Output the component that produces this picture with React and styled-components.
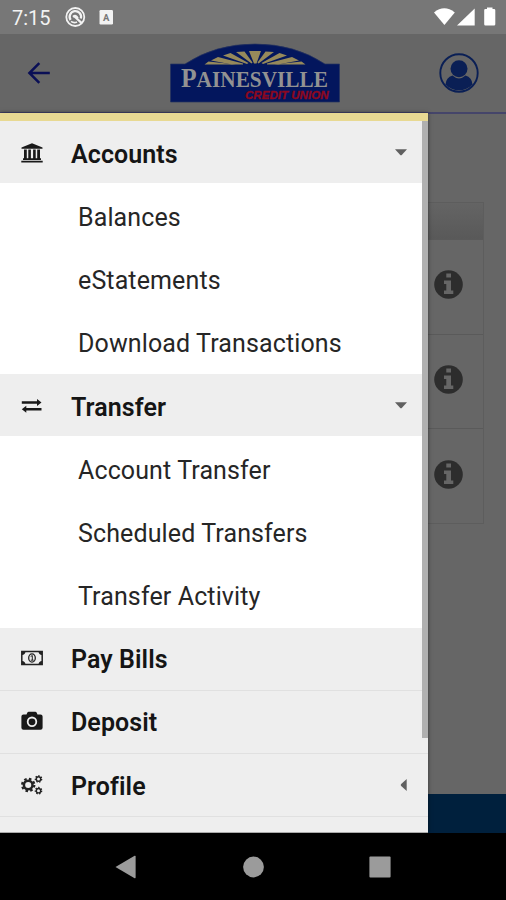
import React from 'react'
import styled, { createGlobalStyle } from 'styled-components'

const menu = [
  {
    title: 'Accounts',
    icon: 'bank',
    open: true,
    items: ['Balances', 'eStatements', 'Download Transactions'],
  },
  {
    title: 'Transfer',
    icon: 'exchange',
    open: true,
    items: ['Account Transfer', 'Scheduled Transfers', 'Transfer Activity'],
  },
  { title: 'Pay Bills', icon: 'money' },
  { title: 'Deposit', icon: 'camera' },
  { title: 'Profile', icon: 'cogs', closed: true },
]

function App() {
  return (
    <Screen>
      <GlobalStyle />
      <StatusBar>
        <Clock>7:15</Clock>
        <StatusIcons />
        <Spacer />
        <SignalIcons />
      </StatusBar>
      <Header>
        <BackArrow />
        <LogoBox><Logo /></LogoBox>
        <UserIcon />
      </Header>
      <Page>
        <Card>
          <CardHead />
          <CardRow><InfoIcon /></CardRow>
          <CardRow><InfoIcon /></CardRow>
          <CardRow><InfoIcon /></CardRow>
        </Card>
      </Page>
      <Footer />
      <NavBar>
        <svg width="22" height="24" viewBox="0 0 22 24">
          <path d="M0.5 12 L19.6 0.8 Q20.6 .4 20.6 1.4 V22.6 Q20.6 23.6 19.6 23.2 Z" fill="#9b9b9b" />
        </svg>
        <svg width="22" height="22" viewBox="0 0 22 22">
          <circle cx="11.5" cy="11" r="10.4" fill="#9b9b9b" />
        </svg>
        <svg width="22" height="22" viewBox="0 0 22 22">
          <rect x=".4" y=".4" width="21.2" height="21.2" rx="1" fill="#9b9b9b" />
        </svg>
      </NavBar>
      <Drawer>
        {menu.map(group => (
          <React.Fragment key={group.title}>
            <GroupTitle $plain={!group.items}>
              <IconBox><MenuIcon name={group.icon} /></IconBox>
              <Label>{group.title}</Label>
              {group.open && (
                <Caret width="12" height="7" viewBox="0 0 12 7">
                  <path d="M0 .3H12L7 5.8Q6 6.8 5 5.8Z" fill="#606060" />
                </Caret>
              )}
              {group.closed && (
                <Caret width="7" height="12" viewBox="0 0 7 12">
                  <path d="M6.7 0V12L1.2 7Q.2 6 1.2 5Z" fill="#606060" />
                </Caret>
              )}
            </GroupTitle>
            {group.items && (
              <SubList>
                {group.items.map(item => <SubItem key={item}>{item}</SubItem>)}
              </SubList>
            )}
          </React.Fragment>
        ))}
        <NextGroup />
        <ScrollThumb />
      </Drawer>
    </Screen>
  )
}

export default App

function StatusIcons() {
  return (
    <svg width="50" height="22" viewBox="0 0 50 22" fill="none">
      <circle cx="10.3" cy="11" r="9" stroke="#f2f2f2" strokeWidth="1.8" />
      <path d="M5.6 14A5.7 5.7 0 1 1 15.8 12.5" stroke="#f2f2f2" strokeWidth="2.3" />
      <path d="M9.5 10.5L17 17.4M8 10.8Q11 8.5 12.7 12.5" stroke="#f2f2f2" strokeWidth="2.2" />
      <path d="M6 15.4Q9 17.6 12 16" stroke="#f2f2f2" strokeWidth="1.7" />
      <rect x="34.5" y="4" width="13.5" height="14.5" rx="1.2" fill="#f2f2f2" />
      <text x="41.3" y="14.6" textAnchor="middle" fontFamily="Roboto, sans-serif" fontWeight="700" fontSize="9.5" fill="#777">A</text>
    </svg>
  )
}

function SignalIcons() {
  return (
    <svg width="64" height="20" viewBox="0 0 64 20" fill="#fff">
      <path d="M0 5.5Q10.2 -2.8 20.8 5.5L10.4 18Z" />
      <path d="M23 18.5H40.7V1.5Z" />
      <path d="M50.2 3.2Q50.2 2 51.4 2H53V.4H58.5V2H60Q61.3 2 61.3 3.2V17.3Q61.3 18.5 60 18.5H51.4Q50.2 18.5 50.2 17.3Z" />
    </svg>
  )
}

function BackArrow() {
  return (
    <svg width="24" height="24" viewBox="0 0 24 24" fill="none" stroke="#0a0f56" strokeWidth="2.5">
      <path d="M22.8 12H2.5M12.3 2.2L2.4 12L12.3 21.8" />
    </svg>
  )
}

function Logo() {
  return (
    <svg width="170" height="60" viewBox="0 0 170 60">
      <path d="M.5 21H15Q45 1 85 1T155 21H169.5V59H.5Z" fill="#03165d" stroke="#26345f" strokeWidth=".7" />
      <g fill="#96895b">
        <path d="M79 8H91L86.5 20.5H84Z" />
        <path d="M66 9L74.500 8.500L82.500 19.500L81.500 20.500Z" />
        <path d="M104 9L95.500 8.500L87.500 19.500L88.500 20.500Z" />
        <path d="M53 12.5L60.5 10L78.5 20L77 21Z" />
        <path d="M117 12.5L109.5 10L91.5 20L93 21Z" />
        <path d="M41 17.5L48 14L73 20.5V21.5H62Z" />
        <path d="M129 17.5L122 14L97 20.5V21.5H108Z" />
        <path d="M34.5 21.5L38.5 18.5L66 21.5ZM135.500 21.5L131.5 18.5L104 21.5Z" />
      </g>
      <text y="44.4" x="11" textLength="147" lengthAdjust="spacingAndGlyphs" fontFamily="'Liberation Serif', serif" fontWeight="700" fill="#929292">
        <tspan fontSize="27">P</tspan><tspan fontSize="22.5">AINESVILLE</tspan>
      </text>
      <text y="55.6" x="75" textLength="83.5" lengthAdjust="spacingAndGlyphs" fontFamily="'Liberation Sans', sans-serif" fontWeight="700" fontStyle="italic" fontSize="11" fill="#8c0820" stroke="#8c0820" strokeWidth=".4">CREDIT UNION</text>
    </svg>
  )
}

function UserIcon() {
  return (
    <svg width="40" height="40" viewBox="0 0 40 40">
      <circle cx="20" cy="20" r="18.7" fill="none" stroke="#0a1f55" strokeWidth="1.9" />
      <circle cx="20" cy="15.8" r="8.5" fill="#0a1f55" />
      <path d="M6.5 31.5Q7 24.5 13.5 22.5Q20 28.5 26.5 22.5Q33 24.5 33.5 31.5A18.5 18.5 0 0 1 6.5 31.5Z" fill="#0a1f55" />
    </svg>
  )
}

function InfoIcon() {
  return (
    <svg width="29" height="29" viewBox="0 0 29 29">
      <circle cx="14.5" cy="14.5" r="14.3" fill="#2d2d2d" />
      <path d="M12.3 3.5H17V7.6H12.3ZM10 10.500H17V20.5H19.3V24H10V20.5H12.3V14H10Z" fill="#666" />
    </svg>
  )
}

function MenuIcon({ name }) {
  if (name === 'bank') {
    return (
      <svg width="22" height="20" viewBox="0 0 22 20" fill="#191919">
        <path d="M.5 4.4L11 .2L21.5 4.4V5.8H.5Z" />
        <path d="M3 6.4H5.8V16H3ZM7.3 6.4H9.9V16H7.3ZM12.1 6.4H14.7V16H12.1ZM16.2 6.4H19V16H16.2Z" />
        <path d="M2 15.2H20V16.9H2ZM.3 17.8H21.7V19.6H.3Z" />
      </svg>
    )
  }
  if (name === 'exchange') {
    return (
      <svg width="22" height="16" viewBox="0 0 22 16" fill="#191919">
        <path d="M.8 3.3H16V1L20.5 4.5L16 8V5.7H.8Z" />
        <path d="M20.5 10.100H5.3V7.800L.8 11.300L5.3 14.800V12.500H20.5Z" />
      </svg>
    )
  }
  if (name === 'money') {
    return (
      <svg width="22" height="16" viewBox="0 0 22 16">
        <path d="M.8 1.4H21.2V14.6H.8Z" fill="none" stroke="#222" strokeWidth="1.5" />
        <path d="M1 1.5H4.5Q4.2 4.8 1 5ZM21 1.5H17.5Q17.8 4.8 21 5ZM1 14.5H4.5Q4.2 11.2 1 11ZM21 14.5H17.5Q17.8 11.2 21 11Z" fill="#222" />
        <ellipse cx="11" cy="8" rx="3.3" ry="4.2" fill="none" stroke="#222" strokeWidth="1.3" />
        <path d="M9.7 6.5L11.3 5.5V10M9.7 10.2H12.7" fill="none" stroke="#222" strokeWidth="1" />
      </svg>
    )
  }
  if (name === 'camera') {
    return (
      <svg width="22" height="20" viewBox="0 0 22 20">
        <path d="M2.5 3.5H5.5L6.4 1.5Q6.8.7 7.7.7H14.3Q15.2.7 15.6 1.5L16.5 3.5H19.5Q21.6 3.5 21.6 5.6V16.7Q21.6 18.7 19.5 18.7H2.5Q.4 18.7.4 16.7V5.6Q.4 3.5 2.5 3.5Z" fill="#191919" />
        <circle cx="11" cy="10.8" r="4.3" fill="none" stroke="#eee" strokeWidth="1.8" />
      </svg>
    )
  }
  return (
    <svg width="22" height="20" viewBox="0 0 22 20" fill="none" stroke="#222">
      <circle cx="7.2" cy="10" r="4.3" strokeWidth="2.5" />
      <circle cx="7.2" cy="10" r="6.1" strokeWidth="2.2" strokeDasharray="2.5 2.29" />
      <circle cx="17.5" cy="4" r="2.2" strokeWidth="1.4" />
      <circle cx="17.5" cy="4" r="3.2" strokeWidth="1.3" strokeDasharray="1.45 1.42" />
      <circle cx="17.5" cy="15.7" r="2.2" strokeWidth="1.4" />
      <circle cx="17.5" cy="15.7" r="3.2" strokeWidth="1.3" strokeDasharray="1.45 1.42" />
    </svg>
  )
}

const GlobalStyle = createGlobalStyle`
  * {
    box-sizing: border-box;
  }

  body {
    margin: 0;
    font-family: Roboto, "Liberation Sans", sans-serif;
  }

  svg {
    display: block;
    flex-shrink: 0;
  }
`

const Screen = styled.div`
  position: relative;
  width: 506px;
  height: 900px;
  display: flex;
  flex-direction: column;
  overflow: hidden;
  background: #666;
`

const StatusBar = styled.div`
  height: 34px;
  flex-shrink: 0;
  display: flex;
  align-items: center;
  padding: 0 8px 0 12px;
  background: #777;
`

const Clock = styled.div`
  width: 53px;
  font-size: 20px;
  color: #f2f2f2;
  padding-top: 2px;
`

const Spacer = styled.div`
  flex: 1;
`

const Header = styled.div`
  height: 80px;
  flex-shrink: 0;
  display: flex;
  align-items: center;
  padding: 0 27px;
  border-bottom: 2px solid #45456a;
`

const LogoBox = styled.div`
  flex: 1;
  padding: 0 0 1px 119px;
`

const Page = styled.div`
  flex: 1;
  display: flex;
  flex-direction: column;
  padding: 88px 22px 0;
`

const Card = styled.div`
  border: 1px solid #5d5d5d;
`

const CardHead = styled.div`
  height: 36px;
  background: linear-gradient(#646464, #595959);
`

const CardRow = styled.div`
  height: 94.7px;
  display: flex;
  align-items: center;
  justify-content: flex-end;
  padding: 0 20px 4px;
  border-top: 1px solid #5a5a5a;
`

const Footer = styled.div`
  height: 39px;
  flex-shrink: 0;
  background: #00203d;
`

const NavBar = styled.div`
  height: 67px;
  flex-shrink: 0;
  display: flex;
  align-items: center;
  justify-content: space-between;
  padding: 0 115px;
  background: #000;
`

const Drawer = styled.div`
  position: absolute;
  top: 113px;
  left: 0;
  width: 428px;
  height: 720px;
  overflow: hidden;
  border-top: 8px solid #e8d992;
  border-bottom: 1px solid #aaa;
  background: #fff;
  box-shadow: 0 0 4px rgba(0, 0, 0, 0.5);
`

const GroupTitle = styled.div`
  height: ${props => props.$plain ? '63.2px' : '62px'};
  display: flex;
  align-items: center;
  padding: ${props => props.$plain ? '3px' : '5px'} 21px 0;
  background: #eee;
  border-bottom: ${props => props.$plain ? '1px solid #e0e0e0' : 'none'};
`

const IconBox = styled.div`
  width: 50px;
  padding-bottom: 4px;
`

const Label = styled.div`
  flex: 1;
  font-size: 25px;
  font-weight: 600;
  line-height: 30px;
  letter-spacing: 0.08px;
  color: #151515;
`

const Caret = styled.svg`
  margin-bottom: 4px;
`

const SubList = styled.div`
  padding-top: 2px;
`

const SubItem = styled.div`
  height: 63.1px;
  padding-left: 78px;
  line-height: 66px;
  font-size: 25px;
  letter-spacing: 0.12px;
  color: #262626;
`

const NextGroup = styled.div`
  height: 20px;
  background: #eee;
`

const ScrollThumb = styled.div`
  position: absolute;
  top: 0;
  right: 0;
  width: 6px;
  height: 617px;
  background: #b0b0b0;
`
